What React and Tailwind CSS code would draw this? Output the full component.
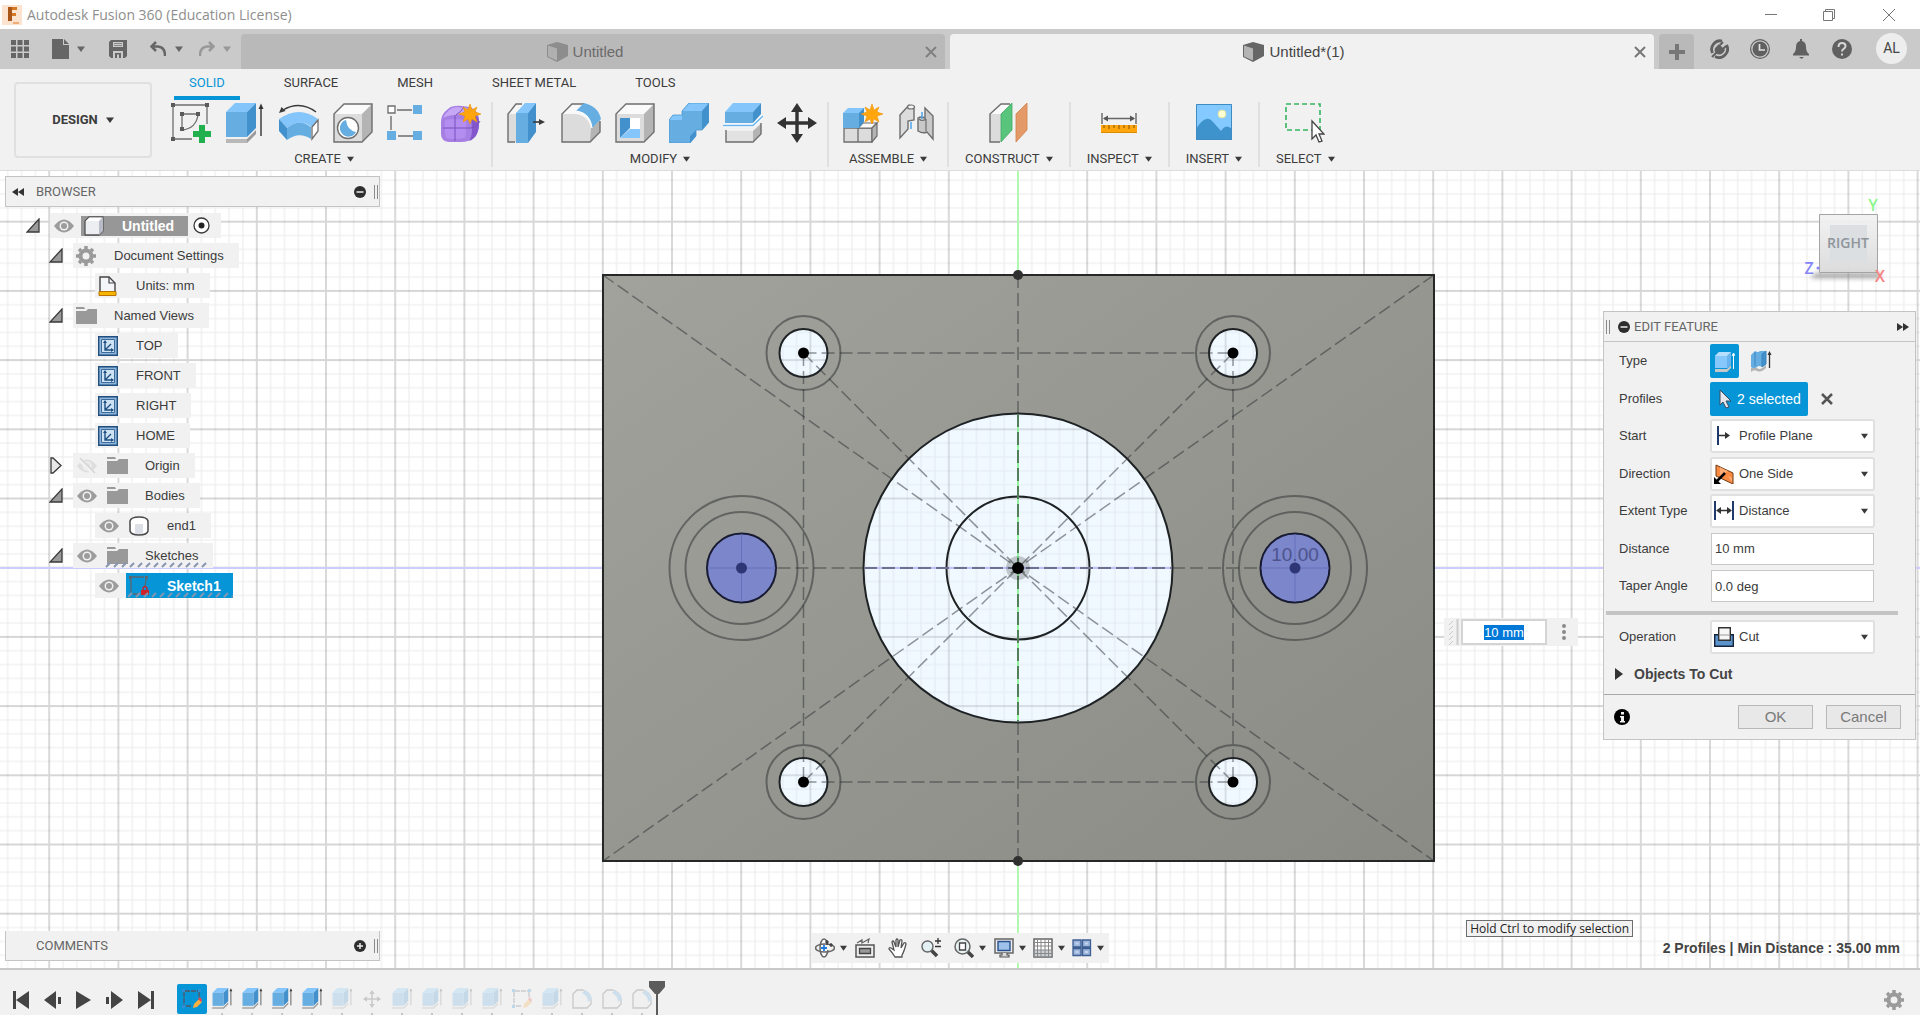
// App.jsx
import React, { useEffect, useRef } from "react";
import clsx from "clsx";

/* ---------- shared icon pieces ---------- */

const Svg = ({ w = 40, h = 40, box, className, children }) => (
  <svg
    width={w}
    height={h}
    viewBox={box || `0 0 ${w} ${h}`}
    fill="none"
    className={clsx("block shrink-0", className)}
    aria-hidden="true"
  >
    {children}
  </svg>
);

const Caret = ({ color = "#3a3a3a", size = 8 }) => (
  <Svg w={size} h={6} box="0 0 8 6">
    <path d="M0 0.5h8L4 6z" fill={color} />
  </Svg>
);

const Star = () => (
  <path
    d="M29 1l2 6 5-3-2 5 6 2-6 2 2 6-5-3-2 5-2-5-5 3 2-6-6-2 6-2-2-5 5 3z"
    fill="#ffa60f"
    stroke="#f09400"
    strokeWidth="0.6"
  />
);

/* ---------- ribbon icons ---------- */

const SketchIcon = () => (
  <Svg>
    <path d="M4 2h31M2 4v30M36 4v17M4 36h17M11 11h16M11 11v15M27 12Q25 25 12 27" stroke="#6e6e6e" strokeWidth="1.3" />
    <path d="M0 0h4v4H0zM34 0h4v4h-4zM0 34h4v4H0zM9 9h4v4H9zM25 9h4v4h-4zM9 24h4v4H9z" fill="#5a5a5a" />
    <path d="M28 22h6v6h6v6h-6v6h-6v-6h-6v-6h6z" fill="#22b04f" />
  </Svg>
);

const ExtrudeIcon = ({ size = 40, arrow = "#333" }) => (
  <Svg w={size} h={size} box="0 0 40 40">
    <path d="M1 36h21l9-9v4l-9 9H1z" fill="#9a9a9a" />
    <path d="M1 36h21v4H1z" fill="#b8b8b8" />
    <path d="M1 9l9-9h21l-9 9z" fill="#84c6fb" />
    <path d="M1 9h21v25H1z" fill="#66ade2" />
    <path d="M22 9l9-9v25l-9 9z" fill="#4291cc" />
    <path d="M36 33V4" stroke={arrow} strokeWidth="1.4" />
    <path d="M33.500 6L36 0.500 38.500 6z" fill={arrow} />
  </Svg>
);

const SweepIcon = () => (
  <Svg>
    <path d="M37 9Q21-3 4 7" stroke="#3a3a3a" strokeWidth="1.4" />
    <path d="M0 10l2.500-6 4 4z" fill="#3a3a3a" />
    <path d="M0 16Q20 2 39 16l-6 8Q20 15 8 25z" fill="#84c6fb" />
    <path d="M0 16l8 9v12l-8-9z" fill="#4291cc" />
    <path d="M8 25Q20 15 32 24v12Q20 28 8 37z" fill="#66ade2" />
    <path d="M33 24l6-7v11l-6 8z" fill="#fff" stroke="#6e6e6e" strokeWidth="1.3" />
  </Svg>
);

const GrayCube = ({ children }) => (
  <Svg>
    <path d="M1 11L11 1h28L29 11z" fill="#fafafa" />
    <path d="M1 11h28v28H1z" fill="#dcdcdc" />
    <path d="M29 11L39 1v28L29 39z" fill="#b4b4b4" />
    <path d="M1 11L11 1h28v28L29 39H1z" stroke="#6e6e6e" strokeWidth="1.4" />
    {children}
  </Svg>
);

const HoleIcon = () => (
  <GrayCube>
    <circle cx="15" cy="25" r="10.500" fill="#fff" stroke="#6e6e6e" strokeWidth="1.4" />
    <path d="M13 17a8.500 8.500 0 1 0 10 12Q14 27 13 17z" fill="#66ade2" />
  </GrayCube>
);

const PatternIcon = () => (
  <Svg>
    <path d="M10 7h15M4 13v14M11 33h15" stroke="#6e6e6e" strokeWidth="1.4" />
    <path d="M1 3h7v7H1z" fill="#fff" stroke="#6e6e6e" strokeWidth="1.3" />
    <path d="M26 2h9v9h-9zM26 28h9v9h-9zM0 28h9v9H0z" fill="#66ade2" />
  </Svg>
);

const FormIcon = () => (
  <Svg>
    <path d="M0 19Q0 11 7 6q4-4 14-3l8 1q9 4 9 13 1 12-5 17-4 5-13 5H8q-8-1-8-8z" fill="#a57fe3" />
    <path d="M28 13q10-3 10 6 0 12-5 16-3 3-5 3 3-4 3-12 0-9-3-13z" fill="#8458cc" />
    <path d="M2 15Q7 5 15 4l12 1q-3 6-12 7-8 0-13 3z" fill="#c6a7f5" />
    <path d="M4 17q8-2 21 0 1 8-1 18-12 2-19 0-2-8-1-18z" fill="#b48df0" />
    <path d="M14 12v26M2 25h28q6-1 9-7M15 12q5-3 8-8" stroke="#7a50bd" strokeWidth="1" />
    <Star />
  </Svg>
);

const PressPullIcon = () => (
  <Svg>
    <path d="M1 11L9 1h8v38H1z" fill="#f6f6f6" />
    <path d="M1 11h9v28H1z" fill="#dcdcdc" />
    <path d="M15 1H9L1 11v28h7" stroke="#6e6e6e" strokeWidth="1.4" />
    <path d="M9 10l9-10h11l-8 10z" fill="#84c6fb" />
    <path d="M9 10h12v30H9z" fill="#66ade2" />
    <path d="M21 10l8-10v29l-8 11z" fill="#4291cc" />
    <path d="M26 19h8" stroke="#3a3a3a" strokeWidth="1.600" />
    <path d="M32 16l6 3-6 3z" fill="#3a3a3a" />
  </Svg>
);

const FilletIcon = () => (
  <Svg>
    <path d="M1 11L11 1h12Q36 4 39 16v13L29 39H1z" fill="#f8f8f8" />
    <path d="M1 11h14q13 2 15 15v13H1z" fill="#dcdcdc" />
    <path d="M30 25l9-8v12L29 39z" fill="#b4b4b4" />
    <path d="M23 1H11L1 11v28h28l10-10V18" stroke="#6e6e6e" strokeWidth="1.4" />
    <path d="M15 8l8-8Q37 3 40 16l-9 9Q29 10 15 8z" fill="#66ade2" />
    <path d="M15 8q14 2 16 17" stroke="#fff" strokeWidth="1.2" />
  </Svg>
);

const ShellIcon = () => (
  <GrayCube>
    <path d="M5 15h20v20H5z" fill="#fff" />
    <path d="M5 15h10v10L5 35z" fill="#4291cc" />
    <path d="M5 35l10-9h10v9z" fill="#84c6fb" />
  </GrayCube>
);

const CombineIcon = () => (
  <Svg>
    <path d="M0 17l4-5h9V8l7-8h20v19l-7 8h-6v6l-6 7H0z" fill="#66ade2" />
    <path d="M13 8l7-8h20l-7 8zM0 17l4-5h9v5z" fill="#84c6fb" />
    <path d="M33 8l7-8v19l-7 8zM21 33l6-6v6l-6 7z" fill="#4291cc" />
    <path d="M0 17l4-5h9V8l7-8h20v19l-7 8h-6v6l-6 7H0z" stroke="#4a97d2" strokeWidth="0.800" />
  </Svg>
);

const SplitIcon = () => (
  <Svg>
    <path d="M3 28h27l8-8v11l-8 8H3z" fill="#e2e2e2" />
    <path d="M30 28l8-7v10l-8 8z" fill="#b4b4b4" />
    <path d="M3 27v12h27l8-8V20" stroke="#6e6e6e" strokeWidth="1.400" />
    <path d="M2 9l8-9h28l-8 9z" fill="#84c6fb" />
    <path d="M2 9h28v11H2z" fill="#66ade2" />
    <path d="M30 9l8-9v11l-8 9z" fill="#4291cc" />
    <path d="M0 22.500h30L40 13" stroke="#fff" strokeWidth="3.500" />
    <path d="M0 22.500h30L40 13" stroke="#66b5f0" strokeWidth="1.500" />
  </Svg>
);

const MoveIcon = ({ size = 40, color = "#333" }) => (
  <Svg w={size} h={size} box="0 0 40 40">
    <path
      d="M20 0l6 9h-4.300v9.300H31V14l9 6-9 6v-4.300h-9.300V31H26l-6 9-6-9h4.300v-9.300H9V26l-9-6 9-6v4.300h9.300V9H14z"
      fill={color}
    />
  </Svg>
);

const ComponentIcon = () => (
  <Svg>
    <path d="M1 25h14v14H1zM15 25h14v14H15z" fill="#dcdcdc" stroke="#6e6e6e" strokeWidth="1.300" />
    <path d="M15 25l5-5h14l-5 5z" fill="#fafafa" stroke="#6e6e6e" strokeWidth="1.200" />
    <path d="M29 25l5-5v13l-5 6z" fill="#b4b4b4" stroke="#6e6e6e" strokeWidth="1.200" />
    <path d="M0 10l5-5h17l-4 5z" fill="#84c6fb" />
    <path d="M0 10h16v15H0z" fill="#66ade2" />
    <path d="M16 10l5-5v14l-5 6z" fill="#4291cc" />
    <Star />
  </Svg>
);

const JointIcon = () => (
  <Svg>
    <path d="M3 12L12 2l5 2v13l-6 1v8l-8 9z" fill="#dcdcdc" stroke="#6e6e6e" strokeWidth="1.400" />
    <ellipse cx="14" cy="4" rx="3.500" ry="2" fill="#f4f4f4" stroke="#6e6e6e" strokeWidth="1.200" />
    <path d="M28 5l8 8v23l-6-7q-4 2-9-1V15q3-2 7 0z" fill="#c9c9c9" stroke="#6e6e6e" strokeWidth="1.400" />
    <path d="M22 16q3 3 7 0M29 16v12" stroke="#6e6e6e" strokeWidth="1.200" />
    <path d="M14 19v7M25 9v7" stroke="#55a9ec" strokeWidth="1.600" />
  </Svg>
);

const PlaneIcon = () => (
  <Svg>
    <path d="M1 11h11v28H1z" fill="#dcdcdc" />
    <path d="M1 11L12 1h10L12 11z" fill="#fafafa" />
    <path d="M21 1h-9L1 11v28h10" stroke="#6e6e6e" strokeWidth="1.400" />
    <path d="M12 11L23 0v27L12 39z" fill="#58c47c" stroke="#45a966" strokeWidth="0.800" />
    <path d="M27 11L38 0v27L27 39z" fill="#e49a68" stroke="#d0824c" strokeWidth="0.800" />
  </Svg>
);

const MeasureIcon = () => (
  <Svg>
    <path d="M3 10v11M37 10v11M5 15.500h30" stroke="#666" strokeWidth="1.400" />
    <path d="M4 15.500l5-3v6zM36 15.500l-5-3v6z" fill="#555" />
    <path d="M2 22h36v8H2z" fill="#ffa60f" />
    <path d="M5 22v3M10 22v4M15 22v3M20 22v4M25 22v3M30 22v4M35 22v3" stroke="#9a6200" strokeWidth="1.200" />
    <path d="M2 29.500h36" stroke="#dd8c00" />
  </Svg>
);

const ImageIcon = () => (
  <Svg>
    <path d="M2 1h36v36H2z" fill="#84c9ff" />
    <circle cx="28" cy="11" r="4" fill="#ffffd0" stroke="#e2dc9a" strokeWidth="0.800" />
    <path d="M2 26q10-16 17-7l8 9q5-8 11-2v11H2z" fill="#3f93cd" />
    <path d="M2.500 1.500h35v35h-35z" stroke="#3f8cc5" />
  </Svg>
);

const SelectIcon = () => (
  <Svg>
    <path d="M1 1h34v26H1z" stroke="#35b45f" strokeWidth="1.600" strokeDasharray="5 3" />
    <path d="M27 18v18l4-4 3 7 3-1-3-7h5z" fill="#fff" stroke="#444" strokeWidth="1.300" />
  </Svg>
);

/* ---------- data ---------- */

const RIBBON_TABS = ["SOLID", "SURFACE", "MESH", "SHEET METAL", "TOOLS"];

const GROUPS = [
  {
    label: "CREATE",
    icons: [SketchIcon, ExtrudeIcon, SweepIcon, HoleIcon, PatternIcon, FormIcon],
  },
  {
    label: "MODIFY",
    icons: [PressPullIcon, FilletIcon, ShellIcon, CombineIcon, SplitIcon, MoveIcon],
  },
  { label: "ASSEMBLE", icons: [ComponentIcon, JointIcon] },
  { label: "CONSTRUCT", icons: [PlaneIcon] },
  { label: "INSPECT", icons: [MeasureIcon] },
  { label: "INSERT", icons: [ImageIcon] },
  { label: "SELECT", icons: [SelectIcon] },
];

const TREE = [
  { level: 0, toggle: "open", eye: "on", icon: "box", text: "Untitled", root: true },
  { level: 1, toggle: "open", icon: "gear", text: "Document Settings" },
  { level: 2, icon: "units", text: "Units: mm" },
  { level: 1, toggle: "open", icon: "folder", text: "Named Views" },
  { level: 2, icon: "view", text: "TOP" },
  { level: 2, icon: "view", text: "FRONT" },
  { level: 2, icon: "view", text: "RIGHT" },
  { level: 2, icon: "view", text: "HOME" },
  { level: 1, toggle: "closed", eye: "off", icon: "folder", text: "Origin" },
  { level: 1, toggle: "open", eye: "on", icon: "folder", text: "Bodies" },
  { level: 2, eye: "on", icon: "body", text: "end1" },
  { level: 1, toggle: "open", eye: "on", icon: "folder", text: "Sketches", hatch: true },
  { level: 2, eye: "on", icon: "sketch", text: "Sketch1", selected: true, hatch: true },
];

const TIMELINE = [
  "extrude", "extrude", "extrude", "extrude", "extrude-off", "move-off",
  "extrude-off", "extrude-off", "extrude-off", "extrude-off", "sketch-off",
  "extrude-off", "fillet-off", "fillet-off", "fillet-off",
];

/* ---------- title bar and document tabs ---------- */

const FusionLogo = () => (
  <Svg w={20} h={20}>
    <path d="M0 0h20v20H0z" fill="#fbe3d0" />
    <path d="M6 2h9v3h-5v3h4v3h-4v5H6z" fill="#d77a25" />
    <path d="M6 2h4v14H6z" fill="#a8551a" />
    <path d="M11 17h6v2h-6z" fill="#f0ae74" />
  </Svg>
);

const TitleBar = () => (
  <header className="flex h-[29px] items-center bg-white pl-[2px] text-[#8e8e8e]">
    <FusionLogo />
    <h1 className="ml-[5px] flex-1 font-['Open_Sans',sans-serif] text-[14px] leading-5">
      Autodesk Fusion 360 (Education License)
    </h1>
    <button aria-label="Minimize" className="flex w-[58px] justify-center">
      <Svg w={12} h={12}><path d="M0 5.500h12" stroke="#777" /></Svg>
    </button>
    <button aria-label="Restore" className="flex w-[58px] justify-center">
      <Svg w={12} h={12}><path d="M.5 2.500h9v9h-9zM2.500 2.500v-2h9v9h-2" stroke="#777" /></Svg>
    </button>
    <button aria-label="Close" className="flex w-[62px] justify-center">
      <Svg w={12} h={12}><path d="M0 0l12 12M12 0L0 12" stroke="#777" /></Svg>
    </button>
  </header>
);

const TabCube = ({ active }) => (
  <Svg w={21} h={20}>
    <path d="M0 3l10-3 11 3v11l-11 6L0 15z" fill={active ? "#666" : "#8d8d8d"} />
    <path d="M1 3.500l9 3v12l-9-4z" fill={active ? "#b4b4b4" : "#b0b0b0"} />
  </Svg>
);

const DocTab = ({ active, children }) => (
  <div
    className={clsx(
      "flex flex-1 items-center rounded-t-[4px] px-[6px] text-[15px]",
      active ? "bg-[#f1f1f1] text-[#444]" : "bg-[#b9b9b9] text-[#6b6b6b]"
    )}
  >
    <button className="flex flex-1 items-center justify-center gap-[5px] pt-px">
      <TabCube active={active} />
      {children}
    </button>
    <button aria-label="Close tab" className="p-[2px]">
      <Svg w={12} h={12}>
        <path d="M1 1l10 10M11 1L1 11" stroke={active ? "#777" : "#808080"} strokeWidth="2" />
      </Svg>
    </button>
  </div>
);

const TabBar = () => (
  <div className="flex h-10 bg-[#cacaca] pt-[5px]">
    <div className="flex w-[241px] shrink-0 items-center pb-[6px] pl-[11px]">
      <button aria-label="Data panel">
        <Svg w={18} h={18}>
          <path
            d="M0 0h5v5H0zM6.500 0h5v5h-5zM13 0h5v5h-5zM0 6.500h5v5H0zM6.500 6.500h5v5h-5zM13 6.500h5v5h-5zM0 13h5v5H0zM6.500 13h5v5h-5zM13 13h5v5h-5z"
            fill="#666"
          />
        </Svg>
      </button>
      <button aria-label="File" className="ml-[23px] flex items-center gap-2">
        <Svg w={17} h={20}>
          <path d="M0 0h11v6h6v14H0zM12 0l5 5h-5z" fill="#666" />
        </Svg>
        <Caret color="#666" />
      </button>
      <button aria-label="Save" className="ml-[24px]">
        <Svg w={18} h={18}>
          <path d="M0 2l2-2h16v16l-2 2H2l-2-2z" fill="#666" />
          <path d="M4 2h10v5H4zM4 11h10v7H4z" fill="#cacaca" />
          <path d="M5 3.500h8M5 5.500h8" stroke="#888" />
          <path d="M6 13h6v5H6z" fill="#666" />
          <path d="M8 14.500h2V18H8z" fill="#cacaca" />
        </Svg>
      </button>
      <button aria-label="Undo" className="ml-[23px] flex items-center gap-[9px]">
        <Svg w={16} h={16}>
          <path d="M6 1L1.500 5.500 6 10M2 5.500h6Q15 6 15 15" stroke="#666" strokeWidth="2.500" />
        </Svg>
        <Caret color="#666" />
      </button>
      <button aria-label="Redo" className="ml-4 flex items-center gap-2">
        <Svg w={16} h={16}>
          <path d="M10 1l4.500 4.500L10 10M14 5.500H8Q1 6 1 15" stroke="#989898" strokeWidth="2.500" />
        </Svg>
        <Caret color="#989898" />
      </button>
    </div>
    <div className="flex flex-1 gap-[5px]">
      <DocTab>Untitled</DocTab>
      <DocTab active>Untitled*(1)</DocTab>
      <button aria-label="New tab" className="flex w-[35px] items-center justify-center rounded-t-[4px] bg-[#b9b9b9]">
        <Svg w={16} h={16}><path d="M8 0v16M0 8h16" stroke="#777" strokeWidth="4" /></Svg>
      </button>
    </div>
    <div className="flex w-[226px] shrink-0 items-center gap-[21px] pb-[6px] pl-[15px]">
      <button aria-label="Extensions">
        <Svg w={20} h={20}>
          <path d="M3.500 14A8.500 8.500 0 0 1 13 2M17.500 6A8.500 8.500 0 0 1 6 17.500" stroke="#606060" strokeWidth="2.800" />
          <path d="M7 8l3-3 6 6-2 3q-4 3-7 0-3-3 0-6z" fill="#606060" />
          <path d="M11 6l3-3M14 10l3-3M8 13l-5 5" stroke="#606060" strokeWidth="2" />
        </Svg>
      </button>
      <button aria-label="Job status">
        <Svg w={20} h={20}>
          <circle cx="10" cy="10" r="9.400" stroke="#606060" strokeWidth="1.200" />
          <circle cx="10" cy="10" r="7.500" fill="#606060" />
          <path d="M9.500 5v6H15" stroke="#e2e2e2" strokeWidth="1.700" />
        </Svg>
      </button>
      <button aria-label="Notifications">
        <Svg w={20} h={20}>
          <path d="M9 0h2v2q4 1 4 6 0 5 3 7v1.500H2V15q3-2 3-7 0-5 4-6zM8 18h5l-2.500 2z" fill="#606060" />
        </Svg>
      </button>
      <button aria-label="Help">
        <Svg w={20} h={20}>
          <circle cx="10" cy="10" r="10" fill="#606060" />
          <path d="M6.500 8q0-4 3.500-4t3.500 3q0 2-2 3-1.500 1-1.500 2.500" stroke="#d6d6d6" strokeWidth="2" />
          <path d="M9 14.500h2v2H9z" fill="#d6d6d6" />
        </Svg>
      </button>
      <button className="ml-[3px] size-[31px] rounded-full bg-[#ededed] font-['Roboto',sans-serif] text-[14px] text-[#444]">
        AL
      </button>
    </div>
  </div>
);

/* ---------- ribbon ---------- */

const Ribbon = () => (
  <div className="flex h-[102px] border-b border-[#dcdcdc] bg-[#f1f1f1] font-['Roboto',sans-serif] text-[13px] leading-4 text-[#3c3c3c]">
    <button className="mt-[13px] ml-[14px] flex h-[76px] w-[138px] shrink-0 items-center justify-center gap-2 rounded-[4px] border-2 border-[#e0e0e0] font-bold">
      DESIGN <Caret />
    </button>
    <div className="ml-[5px]">
      <nav className="flex gap-[29px] pl-[17px]">
        {RIBBON_TABS.map((tab, i) => (
          <button
            key={tab}
            className={clsx(
              "border-b-4 px-[15px] pt-[6px] pb-[5px]",
              i === 0 ? "border-[#0696d7] text-[#0696d7]" : "border-transparent"
            )}
          >
            {tab}
          </button>
        ))}
      </nav>
      <div className="mt-[2px] flex">
        {GROUPS.map(({ label, icons }) => (
          <div
            key={label}
            className={clsx(
              "flex h-[65px] flex-col items-center border-r-2 border-[#e0e0e0] last:border-r-0",
              icons.length > 1 ? "px-[10px]" : "px-4"
            )}
          >
            <div
              className={clsx(
                "flex h-[49px] items-start gap-[14px] pt-px",
                icons.length > 1 && "pl-1"
              )}
            >
              {icons.map((Icon, i) => (
                <button key={i} aria-label={`${label} tool ${i + 1}`}>
                  <Icon />
                </button>
              ))}
            </div>
            <button className="flex items-center gap-[6px]">
              {label} <Caret size={7} />
            </button>
          </div>
        ))}
      </div>
    </div>
  </div>
);

/* ---------- browser tree ---------- */

const Toggle = ({ state }) => {
  if (!state) return <span className="w-6" />;
  return (
    <button aria-label="Toggle" className="w-6">
      {state === "open" ? (
        <Svg w={14} h={15}>
          <path d="M13 1v13H1z" fill="#9a9a9a" stroke="#3a3a3a" strokeWidth="1.300" />
        </Svg>
      ) : (
        <Svg w={14} h={17}>
          <path d="M2 1h2l8 7.500L4 16H2z" fill="#e8e8e8" stroke="#3a3a3a" strokeWidth="1.300" />
        </Svg>
      )}
    </button>
  );
};

const Eye = ({ off }) => (
  <Svg w={20} h={16}>
    <path d="M0 8q10-13 20 0-10 13-20 0z" fill={off ? "#dedede" : "#9c9c9c"} />
    <circle cx="10" cy="8" r="4.500" fill="#f1f1f1" />
    <circle cx="10" cy="8" r="3" fill={off ? "#dedede" : "#9c9c9c"} />
    {off && <path d="M2 1l15 15" stroke="#f1f1f1" strokeWidth="4" />}
    {off && <path d="M3 0l15 15" stroke="#d6d6d6" strokeWidth="1.500" />}
  </Svg>
);

const Gear = () => (
  <Svg w={20} h={20}>
    <circle cx="10" cy="10" r="5.500" stroke="#9a9a9a" strokeWidth="4" />
    <path
      d="M10 0v3M10 17v3M0 10h3M17 10h3M3 3l2 2M15 15l2 2M17 3l-2 2M5 15l-2 2"
      stroke="#9a9a9a"
      strokeWidth="3.500"
    />
  </Svg>
);

const TreeIcon = ({ name }) => {
  if (name === "gear") return <Gear />;
  if (name === "box")
    return (
      <Svg w={20} h={20}>
        <path d="M1 5l4-4h14v14l-4 4H1z" fill="#eceef2" stroke="#555" strokeWidth="1.300" strokeLinejoin="round" />
        <path d="M15 5l4-4v14l-4 4z" fill="#b8bcc6" />
        <path d="M2 5l3.500-3.500H18L15 5z" fill="#fff" />
      </Svg>
    );
  if (name === "units")
    return (
      <Svg w={20} h={20}>
        <path d="M2 15V1h9l6 6v8" fill="#f4f6fa" stroke="#444" strokeWidth="1.400" />
        <path d="M11 1v6h6" stroke="#444" strokeWidth="1.200" />
        <path d="M1 15.500h17v4H1z" fill="#f7b500" stroke="#b87300" />
      </Svg>
    );
  if (name === "view")
    return (
      <Svg w={20} h={20}>
        <path d="M.7.7h18.600v18.600H.7z" fill="#8fb4d8" stroke="#1e4f80" strokeWidth="1.400" />
        <path d="M3.500 3.500h13v13h-13z" fill="#cfe2f4" stroke="#3a6c9e" />
        <path d="M7 6v8h8M7 14l6-6" stroke="#1e4f80" strokeWidth="1.400" />
        <path d="M5 7l2-3 2 3zM13 12l3 2-3 2z" fill="#1e4f80" />
      </Svg>
    );
  if (name === "body")
    return (
      <Svg w={20} h={20}>
        <path d="M1 5q1-4 9-4t9 4v10q-1 4-9 4t-9-4z" fill="#fff" stroke="#4a4a4a" strokeWidth="1.500" />
        <path d="M6 8h8v10H6z" fill="#dcdfe6" />
      </Svg>
    );
  if (name === "sketch")
    return (
      <Svg w={20} h={20}>
        <path d="M3 1h12M2 3v14M17 3l-1 8M4 18h6" stroke="#5a6670" strokeWidth="1.300" />
        <path d="M0 0h3v3H0zM16 0h3v3h-3z" fill="#5a6670" />
        <path d="M12 14h8v5h-8z" fill="#cc2229" />
        <path d="M14 14v-2q2-3 4 0v2" stroke="#cc2229" strokeWidth="1.400" />
      </Svg>
    );
  return (
    <Svg w={21} h={17}>
      <path d="M0 0h8l1 2H0zM0 4h10l2-2h9v15H0z" fill="#999" />
    </Svg>
  );
};

const Hatch = () => (
  <svg className="absolute bottom-0 left-0 h-[6px] w-full" aria-hidden="true">
    <defs>
      <pattern id="hatch" width="8" height="6" patternUnits="userSpaceOnUse">
        <path d="M2 5l4-4" stroke="#8595ad" strokeWidth="2" />
      </pattern>
    </defs>
    <rect width="100%" height="6" fill="url(#hatch)" />
  </svg>
);

const TreeRow = ({ row }) => (
  <li
    className={clsx(
      "flex h-[25px] items-center",
      row.level === 0 && "pl-[26px]",
      row.level === 1 && "pl-[49px]",
      row.level === 2 && "pl-[71px]"
    )}
  >
    <Toggle state={row.toggle} />
    <div className={clsx("flex h-[25px] items-center bg-[#f1f1f1]", !row.selected && "pr-1")}>
      {row.eye && (
        <button aria-label="Visibility" className="flex h-full w-[31px] items-center pl-1">
          <Eye off={row.eye === "off"} />
        </button>
      )}
      <div
        className={clsx(
          "relative flex items-center pl-[3px]",
          row.root && "h-5 bg-[#979797] pr-[14px] text-[14px] font-bold text-white",
          row.selected && "h-[25px] bg-[#0696d7] pr-3 text-[14px] font-bold text-white",
          !row.root && !row.selected && "h-[25px] pr-[11px]"
        )}
      >
        <span className="w-[38px]">
          <TreeIcon name={row.icon} />
        </span>
        {row.text}
        {row.hatch && <Hatch />}
      </div>
      {row.root && (
        <label className="mr-[7px] ml-[5px] flex">
          <input type="radio" defaultChecked aria-label="Activate" className="sr-only" />
          <Svg w={17} h={17}>
            <circle cx="8.500" cy="8.500" r="7.500" fill="#fff" stroke="#3a3a3a" strokeWidth="1.300" />
            <circle cx="8.500" cy="8.500" r="3" fill="#222" />
          </Svg>
        </label>
      )}
    </div>
  </li>
);

const RoundSign = ({ plus }) => (
  <Svg w={12} h={12}>
    <circle cx="6" cy="6" r="6" fill="#2e2e2e" />
    <path d={plus ? "M3 6h6M6 3v6" : "M2.500 6h7"} stroke="#eee" strokeWidth="1.500" />
  </Svg>
);

const Grip = () => <span className="flex h-[14px] w-[4px] border-x border-[#8a8a8a]" />;

const BrowserPanel = () => (
  <aside className="absolute top-[5px] left-0 text-[13px] leading-4 text-[#3c3c3c]">
    <div className="ml-[5px] flex h-[31px] w-[375px] items-center border border-[#c4c4c4] bg-[#f1f1f1] pr-px pl-[6px] font-['Roboto',sans-serif] text-[#666]">
      <button aria-label="Collapse">
        <Svg w={12} h={8}><path d="M6 0v8L0 4zM12 0v8L6 4z" fill="#333" /></Svg>
      </button>
      <h2 className="ml-3 flex-1">BROWSER</h2>
      <button aria-label="Options" className="mr-2"><RoundSign /></button>
      <Grip />
    </div>
    <ul className="mt-[6px] flex flex-col gap-[5px]">
      {TREE.map((row) => (
        <TreeRow key={row.text} row={row} />
      ))}
    </ul>
  </aside>
);

/* ---------- drawing canvas ---------- */

const CORNERS = [
  [803.500, 182],
  [1233, 182],
  [803.500, 611],
  [1233, 611],
];

const Canvas = () => (
  <svg
    className="absolute inset-0 size-full bg-white"
    viewBox="0 0 1920 797"
    preserveAspectRatio="xMidYMid slice"
    role="img"
    aria-label="Sketch canvas"
  >
    <defs>
      <pattern id="grid" x="1018" y="396.700" width="69.200" height="69.200" patternUnits="userSpaceOnUse">
        <path
          d="M13.840 0v69.200M27.680 0v69.200M41.520 0v69.200M55.360 0v69.200M0 13.840h69.200M0 27.680h69.200M0 41.520h69.200M0 55.360h69.200"
          stroke="#000"
          strokeOpacity="0.080"
        />
        <path d="M0 0v69.200M69.200 0v69.200M0 0h69.200M0 69.200h69.200" stroke="#000" strokeOpacity="0.160" strokeWidth="1.800" />
      </pattern>
      <linearGradient id="plate" x1="0" y1="0" x2="1" y2="1">
        <stop offset="0" stopColor="#a1a29c" />
        <stop offset="1" stopColor="#8a8b84" />
      </linearGradient>
    </defs>

    <rect width="1920" height="797" fill="url(#grid)" />
    <path d="M0 397h1920" stroke="#ccccff" strokeWidth="2" />
    <path d="M1018 0v797" stroke="#b0fab0" strokeWidth="2" />

    <rect x="603" y="104" width="831" height="586" fill="url(#plate)" stroke="#262828" strokeWidth="2" />

    {/* through holes */}
    {[[1018, 397, 154.500], ...CORNERS.map(([x, y]) => [x, y, 24])].map(([x, y, r]) => (
      <g key={`${x}-${y}`}>
        <circle cx={x} cy={y} r={r} fill="#f0f9ff" />
        <circle cx={x} cy={y} r={r} fill="url(#grid)" fillOpacity="0.700" stroke="#1e2224" strokeWidth="2" />
      </g>
    ))}
    <circle cx="1018" cy="397" r="71.500" stroke="#1e2224" strokeWidth="2" fill="none" />
    <path d="M864 397h308" stroke="#c0c0fa" strokeWidth="2" />
    <path d="M1018 243v308" stroke="#8ff29a" strokeWidth="2" />

    {/* counterbore rings */}
    <g fill="none" stroke="#3c3f40" strokeOpacity="0.600" strokeWidth="2">
      {CORNERS.map(([x, y]) => (
        <circle key={`${x}-${y}`} cx={x} cy={y} r="37" />
      ))}
      {[741.500, 1295].map((x) => (
        <g key={x}>
          <circle cx={x} cy="397" r="56" />
          <circle cx={x} cy="397" r="72" />
        </g>
      ))}
    </g>

    {/* construction geometry */}
    <g stroke="#2c3034" strokeWidth="1.500" strokeDasharray="13 5" strokeOpacity="0.500" fill="none">
      <path d="M803.500 182H1233M803.500 611H1233M803.500 182v429M1233 182v429" />
      <path d="M741.500 397H864M1172 397h123M1018 104v139M1018 551v139" />
      <path d="M603 104L1018 397 603 690M1434 104L1018 397l416 293" />
      <path d="M803.500 182L1018 397 803.500 611M1233 182L1018 397l215 214" />
    </g>
    <path
      d="M1018 243v308M864 397h308"
      stroke="#23282c"
      strokeWidth="1.600"
      strokeDasharray="13 5"
      strokeOpacity="0.700"
    />

    {/* selected profiles */}
    {[741.500, 1295].map((x) => (
      <g key={x}>
        <circle cx={x} cy="397" r="34.500" fill="#7b86cb" stroke="#171a30" strokeWidth="2" />
        <path d={`M${x - 34} 397h68M${x} 363v68`} stroke="#6670bd" />
        <circle cx={x} cy="397" r="5.500" fill="#2f3676" />
      </g>
    ))}
    <text x="1295" y="390" textAnchor="middle" fontFamily="Liberation Sans, sans-serif" fontSize="19" fill="#4d538e">
      10.00
    </text>

    {CORNERS.map(([x, y]) => (
      <circle key={`${x}-${y}`} cx={x} cy={y} r="5.500" fill="#000" />
    ))}
    <circle cx="1018" cy="397" r="12" fill="#000" fillOpacity="0.200" />
    <circle cx="1018" cy="397" r="6" fill="#000" />
    <circle cx="1018" cy="104" r="5" fill="#303030" />
    <circle cx="1018" cy="690" r="5" fill="#303030" />
  </svg>
);

const ViewCube = () => (
  <div className="absolute top-[16px] right-[24px]">
    <Svg w={100} h={106} box="0 -8 100 106">
      <defs>
        <linearGradient id="cube" x1="0" y1="0" x2="0" y2="1">
          <stop offset="0" stopColor="#f2f2f2" />
          <stop offset="1" stopColor="#dadada" />
        </linearGradient>
        <filter id="soft" x="-20%" y="-100%" width="140%" height="300%">
          <feGaussianBlur stdDeviation="2.500" />
        </filter>
      </defs>
      <path d="M20 78h66l-4 5H14z" fill="#777" fillOpacity="0.700" filter="url(#soft)" />
      <path d="M23.500 19.500h58v58h-58z" fill="url(#cube)" fillOpacity="0.950" stroke="#a4a4a4" />
      <path d="M34 30h37v37H34z" fill="#dcdfe2" />
      <g fontFamily="Open Sans, sans-serif" fontWeight="600">
        <text x="52" y="53" textAnchor="middle" fontSize="14" fill="#8f959b">RIGHT</text>
        <text x="77" y="16" textAnchor="middle" fontSize="16" fill="#8cf58c">Y</text>
        <text x="13" y="79" textAnchor="middle" fontSize="16" fill="#8585f8">Z</text>
        <text x="84" y="87" textAnchor="middle" fontSize="16" fill="#f98080">X</text>
      </g>
      <circle cx="22" cy="73" r="1.500" fill="#8585f8" />
    </Svg>
  </div>
);

const Manipulator = () => {
  const inputRef = useRef(null);

  useEffect(() => {
    inputRef.current.focus();
    inputRef.current.select();
  }, []);

  return (
    <div className="absolute top-[447px] right-[342px] flex h-7 w-[134px] items-center bg-[#f1f1f1]">
      <span className="ml-1 flex w-[13px]">
        <Svg w={12} h={26}>
          <path d="M1 6l4-4M1 11l4-4M1 16l4-4M1 21l4-4M1 26l4-4" stroke="#ccc" />
          <path d="M9.500 0v26" stroke="#ccc" strokeWidth="2" />
        </Svg>
      </span>
      <input
        ref={inputRef}
        aria-label="Distance value"
        defaultValue="10 mm"
        className="h-[26px] w-[86px] border-2 border-[#d4d4d4] bg-white text-center text-[13px] text-[#333] outline-none selection:bg-[#0078d7] selection:text-white"
      />
      <button aria-label="More" className="ml-[14px]">
        <Svg w={6} h={18}>
          <path d="M3 3v.01M3 9v.01M3 15.010v.01" stroke="#8a8a8a" strokeWidth="4" strokeLinecap="round" />
        </Svg>
      </button>
    </div>
  );
};

/* ---------- edit feature dialog ---------- */

const StartIcon = () => (
  <Svg w={20} h={20}>
    <path d="M4 0v19" stroke="#1f3a6b" strokeWidth="2" />
    <path d="M5 9.500h8" stroke="#333" strokeWidth="1.500" />
    <path d="M11 6l5 3.500-5 3.500z" fill="#333" />
  </Svg>
);

const DirectionIcon = () => (
  <Svg w={20} h={20}>
    <path d="M2 1l17 8v11L2 12z" fill="#fb8b42" stroke="#6e3a14" />
    <path d="M6 3l8 4-8 6zM14 12l4 2v4z" fill="#ffc39a" fillOpacity="0.600" />
    <path d="M11 9l-8 8" stroke="#000" strokeWidth="2.500" />
    <path d="M0 13v7h7z" fill="#000" />
  </Svg>
);

const ExtentIcon = () => (
  <Svg w={20} h={20}>
    <path d="M1 0v19M19 0v19" stroke="#1f3a6b" strokeWidth="2" />
    <path d="M4 9.500h12" stroke="#333" strokeWidth="1.500" />
    <path d="M7 6L2 9.500 7 13zM13 6l5 3.500-5 3.500z" fill="#333" />
  </Svg>
);

const CutIcon = () => (
  <Svg w={20} h={20}>
    <path d="M.7 7.700h18.600v11.600H.7z" fill="#5b94cc" stroke="#16233a" strokeWidth="1.400" />
    <path d="M4.700.7h11.600v12.600H4.700z" fill="#f6f6f6" stroke="#333" strokeWidth="1.400" />
    <path d="M5 8h11" stroke="#999" />
  </Svg>
);

const FieldRow = ({ label, id, children }) => (
  <div className="flex h-[34px] items-center">
    <label htmlFor={id} className="w-[91px] shrink-0">
      {label}
    </label>
    {children}
  </div>
);

const SelectField = ({ label, id, value, icon: Icon }) => (
  <FieldRow label={label} id={id}>
    <div className="relative w-[165px]">
      <span className="pointer-events-none absolute top-[7px] left-[4px]">
        <Icon />
      </span>
      <select
        id={id}
        className="h-[34px] w-full appearance-none rounded-[3px] border-2 border-[#e0e0e0] bg-white pl-[27px] text-[13px]"
      >
        <option>{value}</option>
      </select>
      <span className="pointer-events-none absolute top-[14px] right-[7px]">
        <Caret size={7} />
      </span>
    </div>
  </FieldRow>
);

const InputField = ({ label, id, value }) => (
  <FieldRow label={label} id={id}>
    <input
      id={id}
      defaultValue={value}
      className="ml-px h-8 w-[163px] border border-[#c8c8c8] bg-white pl-[3px] text-[13px]"
    />
  </FieldRow>
);

const EditFeature = () => (
  <section className="absolute top-[140px] right-1 w-[313px] border border-[#c4c4c4] bg-[#f1f1f1] text-[13px] leading-4 text-[#3c3c3c]">
    <div className="flex h-[30px] items-center border-b border-[#c4c4c4] pr-[6px] pl-[2px] font-['Roboto',sans-serif] text-[#666]">
      <Grip />
      <button aria-label="Collapse" className="ml-2"><RoundSign /></button>
      <h2 className="ml-1 flex-1">EDIT FEATURE</h2>
      <button aria-label="Expand">
        <Svg w={12} h={8}><path d="M0 0v8l6-4zM6 0v8l6-4z" fill="#333" /></Svg>
      </button>
    </div>

    <form className="px-[15px] pt-[2px]" onSubmit={(e) => e.preventDefault()}>
      <div className="flex h-[259px] flex-col justify-between">
        <FieldRow label="Type">
          <button type="button" aria-label="Extrude" className="flex h-[34px] w-[29px] items-center justify-center rounded-[2px] bg-[#0696d7]">
            <Svg w={21} h={21}>
              <path d="M1 18h12l4-4v3l-4 4H1z" fill="#c8c8c8" />
              <path d="M1 5l4-4h12v12l-4 4H1z" fill="#86c8fb" />
              <path d="M1 5l4-4h12l-4 4z" fill="#b5dffd" />
              <path d="M13 5l4-4v12l-4 4z" fill="#69b4ee" />
              <path d="M19.500 18V3M18 5l1.500-3L21 5" stroke="#fff" />
            </Svg>
          </button>
          <button type="button" aria-label="Thin extrude" className="ml-[11px]">
            <Svg w={22} h={22}>
              <path d="M1 18q3-3 6 0t9-3v3q-5 5-9 3-3-2-6 1z" fill="#b4b4b4" />
              <path d="M1 5l4-4q3 2 5 0h6v13l-4 3q-3-2-5 0-3 2-6 0z" fill="#66ade2" />
              <path d="M5 2v14M12 4l4-3v13l-4 3z" stroke="#3d86bd" fill="#4291cc" />
              <path d="M19.500 18V3" stroke="#333" strokeWidth="1.300" />
              <path d="M17.500 5l2-4 2 4z" fill="#333" />
            </Svg>
          </button>
        </FieldRow>
        <FieldRow label="Profiles">
          <button type="button" className="flex h-[34px] w-[98px] items-center gap-[5px] rounded-[2px] bg-[#0696d7] pl-[9px] text-[14px] text-white">
            <Svg w={13} h={20}>
              <path d="M1 1v15l3-3 3 6 3-1-3-6h5z" fill="#e6e6ec" stroke="#3a4a60" />
            </Svg>
            2 selected
          </button>
          <button type="button" aria-label="Clear selection" className="ml-[13px]">
            <Svg w={12} h={12}><path d="M1 1l10 10M11 1L1 11" stroke="#555" strokeWidth="2.500" /></Svg>
          </button>
        </FieldRow>
        <SelectField label="Start" id="start" value="Profile Plane" icon={StartIcon} />
        <SelectField label="Direction" id="direction" value="One Side" icon={DirectionIcon} />
        <SelectField label="Extent Type" id="extent" value="Distance" icon={ExtentIcon} />
        <InputField label="Distance" id="distance" value="10 mm" />
        <InputField label="Taper Angle" id="taper" value="0.0 deg" />
      </div>
      <hr className="mt-2 mr-[2px] mb-[5px] -ml-[13px] border-t-4 border-[#c4c4c4]" />
      <SelectField label="Operation" id="operation" value="Cut" icon={CutIcon} />
      <button type="button" className="-ml-1 flex h-[40px] items-center gap-[11px] text-[14px] font-bold text-[#444]">
        <Svg w={8} h={12}><path d="M0 0v12l8-6z" fill="#333" /></Svg>
        Objects To Cut
      </button>
    </form>

    <div className="flex h-[45px] items-center border-t border-[#a8a8a8] pr-[14px] pl-[10px] text-[15px] text-[#7a7a7a]">
      <Svg w={16} h={16}>
        <circle cx="8" cy="8" r="8" fill="#000" />
        <path d="M7 3h3v2.500H7zM6 7h4v5h1v1.500H6V12h1V8.500H6z" fill="#f1f1f1" />
      </Svg>
      <button className="ml-auto h-6 w-[75px] border border-[#b8b8b8] bg-[#e8e8e8]">OK</button>
      <button className="ml-[13px] h-6 w-[75px] border border-[#b8b8b8] bg-[#e8e8e8]">Cancel</button>
    </div>
  </section>
);

/* ---------- navigation bar ---------- */

const NavItem = ({ label, caret, children }) => (
  <button aria-label={label} className="flex items-center gap-[5px]">
    <Svg w={20} h={20}>{children}</Svg>
    {caret && <Caret size={7} />}
  </button>
);

const NavBar = () => (
  <div className="absolute bottom-[5px] left-[811px] flex h-[30px] items-center bg-[#f1f1f1] pr-[5px] pl-1">
    <div className="flex gap-[13px]">
      <NavItem label="Orbit" caret>
        <ellipse cx="9" cy="10" rx="4" ry="9" stroke="#666" strokeWidth="1.500" fill="#fafafa" />
        <ellipse cx="10" cy="10" rx="9.500" ry="4" stroke="#666" strokeWidth="1.500" />
        <path d="M6 7h10v5H6z" fill="#f4f4f4" />
        <path d="M9 7v6M6 10h6" stroke="#1f7be0" strokeWidth="1.800" />
        <path d="M12 2v5M10 4h4M16 5v4M14 7h4" stroke="#333" strokeWidth="1.200" />
      </NavItem>
      <div className="-ml-[5px]">
        <NavItem label="Look at">
          <path d="M1 7h18v12H1z" fill="#eee" stroke="#555" strokeWidth="1.500" />
          <path d="M4.500 10.500h11v5h-11z" fill="#999" stroke="#444" strokeWidth="1.300" />
          <path d="M2 5l5-3v3l7-4-1 4" stroke="#666" strokeWidth="1.300" />
        </NavItem>
      </div>
      <NavItem label="Pan">
        <path
          d="M7 19Q4 14 1 11q0-2 2-1l3 2L4 4q1-2 2 0l2 5V2q1-2 2 0v7l2-7q2-1 2 1l-1 7 3-5q2-1 2 1-2 8-4 11v2z"
          fill="#fff"
          stroke="#555"
          strokeWidth="1.300"
        />
      </NavItem>
      <NavItem label="Zoom">
        <path d="M10 12l6 6" stroke="#444" strokeWidth="3.500" />
        <circle cx="6.500" cy="8.500" r="5.500" fill="#e3f1f4" stroke="#666" strokeWidth="1.400" />
        <path d="M17 0v6M14 3h6M14 8.500h6" stroke="#333" strokeWidth="1.300" />
      </NavItem>
      <NavItem label="Fit" caret>
        <path d="M13 13l6 6" stroke="#444" strokeWidth="3.500" />
        <circle cx="8.500" cy="8.500" r="7.500" fill="#e8f2f2" stroke="#666" strokeWidth="1.500" />
        <path d="M5.500 5h6v7h-6z" fill="#fff" stroke="#444" strokeWidth="1.300" />
      </NavItem>
      <div className="-ml-[5px] flex gap-[7px]">
        <NavItem label="Display" caret>
          <path d="M1 1h18v14H1z" fill="#eee" stroke="#666" strokeWidth="1.500" />
          <path d="M4 3.500h12v9H4z" fill="#9fc0ea" stroke="#27508c" strokeWidth="1.400" />
          <path d="M8 15v2H6v2h9v-2h-2v-2" fill="#ddd" stroke="#555" strokeWidth="1.200" />
        </NavItem>
        <NavItem label="Grid" caret>
          <path d="M1 1h18v18H1z" fill="#fff" stroke="#666" strokeWidth="1.500" />
          <path d="M1 12h18v7H1z" fill="#9aa3ad" fillOpacity="0.500" />
          <path d="M4.500 1v18M8 1v18M12 1v18M15.500 1v18M1 4.500h18M1 8h18M1 12h18M1 15.500h18" stroke="#888" />
        </NavItem>
        <NavItem label="Viewports" caret>
          <path
            d="M1 2h8v7H1zM10.500 2h8v7h-8zM1 10.500h8v7H1zM10.500 10.500h8v7h-8z"
            fill="#9db6dc"
            stroke="#3d5e92"
            strokeWidth="1.300"
          />
          <path d="M3.500 4.500h3v2h-3zM13 4.500h3v2h-3zM3.500 13h3v2h-3zM13 13h3v2h-3z" fill="#c4d4ee" />
        </NavItem>
      </div>
    </div>
  </div>
);

/* ---------- timeline ---------- */

const PLAYBACK = [
  ["First", "M0 0h3v18H0zM16 0v18L3 9z"],
  ["Previous", "M12 0v18L0 9zM14 6h3v7h-3z"],
  ["Play", "M1 0v18l15-9z"],
  ["Next", "M0 6h3v7H0zM5 0v18l12-9z"],
  ["Last", "M1 0v18l13-9zM14 0h3v18h-3z"],
];

const SmallSketch = () => (
  <Svg w={20} h={20}>
    <path d="M3 2h13M2 3v13M17 3v7M4 17h6" stroke="#556" strokeWidth="1.300" strokeDasharray="5 1" />
    <path d="M0 0h3v3H0zM16 0h3v3h-3zM0 16h3v3H0z" fill="#2f8fd4" />
    <path d="M11 19l1-4 5-5 3 3-5 5z" fill="#fbb040" />
    <path d="M16 10l2-2 2 3-1 2z" fill="#e5484d" />
  </Svg>
);

const TimelineIcon = ({ type }) => {
  if (type.startsWith("extrude")) return <ExtrudeIcon size={21} />;
  if (type.startsWith("move")) return <MoveIcon size={18} color="#555" />;
  if (type.startsWith("sketch")) return <SmallSketch />;
  return (
    <Svg w={20} h={20}>
      <path d="M1 5l4-4h6q7 2 8 9v5l-4 4H1z" fill="#eee" stroke="#555" strokeWidth="1.300" />
      <path d="M10 4l3-3q6 3 7 9l-4 3q0-6-6-9z" fill="#66ade2" />
    </Svg>
  );
};

const Timeline = () => (
  <footer className="relative flex h-[47px] shrink-0 items-start border-t-2 border-[#c8c8c8] bg-[#f1f1f1] pt-[14px] pl-[13px]">
    <div className="flex gap-[14px] pt-[7px]">
      {PLAYBACK.map(([label, d]) => (
        <button key={label} aria-label={label}>
          <Svg w={17} h={18}>
            <path d={d} fill="#444" />
          </Svg>
        </button>
      ))}
    </div>
    <div className="ml-[23px] flex">
      <button aria-label="Sketch1" className="flex h-[30px] w-[30px] items-center justify-center rounded-[2px] bg-[#0696d7]">
        <SmallSketch />
      </button>
      {TIMELINE.map((type, i) => (
        <button
          key={i}
          aria-label={`Feature ${i + 1}`}
          className="flex w-[30px] flex-col items-center"
        >
          <span className={clsx("flex h-[29px] items-center", type.endsWith("-off") && "opacity-25")}>
            <TimelineIcon type={type} />
          </span>
          <span className="h-[4px] w-[2px] bg-[#c4c4c4]" />
        </button>
      ))}
    </div>
    <span className="-mt-[3px] -ml-2">
      <Svg w={16} h={34}>
        <path d="M0 0h16v6l-6 7H9v21H7V13H6L0 6z" fill="#5c5c5c" />
      </Svg>
    </span>
    <button aria-label="Timeline settings" className="mt-[6px] mr-4 ml-auto">
      <Gear />
    </button>
  </footer>
);

export default function App() {
  return (
    <div className="flex h-screen flex-col overflow-hidden font-['Liberation_Sans',Arial,sans-serif]">
      <TitleBar />
      <TabBar />
      <Ribbon />
      <main className="relative flex-1 overflow-hidden">
        <Canvas />
        <BrowserPanel />
        <ViewCube />
        <Manipulator />
        <EditFeature />

        <div className="absolute bottom-[7px] left-[5px] flex h-[30px] w-[375px] items-center border border-t-0 border-[#c4c4c4] bg-[#f1f1f1] pr-px pl-[30px] font-['Roboto',sans-serif] text-[13px] text-[#666]">
          <h2 className="flex-1">COMMENTS</h2>
          <button aria-label="Add comment" className="mr-2"><RoundSign plus /></button>
          <Grip />
        </div>
        <NavBar />
        <div
          role="tooltip"
          className="absolute right-[287px] bottom-[31px] h-[17px] border border-[#6e6e6e] bg-[#f1f1f1] px-[3px] font-['Open_Sans',sans-serif] text-[12px] leading-[15px] text-[#222]"
        >
          Hold Ctrl to modify selection
        </div>
        <p className="absolute right-5 bottom-[12px] text-[14px] leading-4 font-bold text-[#444]">
          2 Profiles | Min Distance : 35.00 mm
        </p>
      </main>
      <Timeline />
    </div>
  );
}
